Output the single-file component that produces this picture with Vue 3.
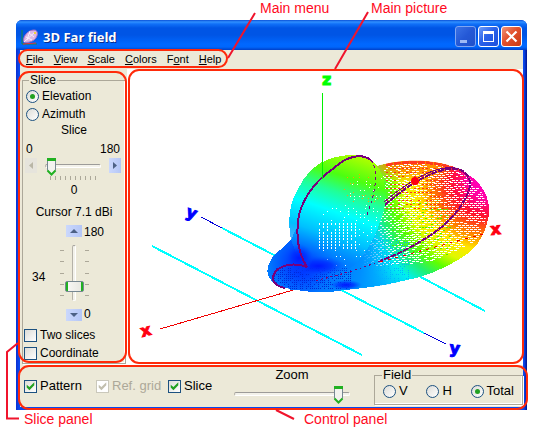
<script setup>
import { ref } from 'vue'

const menus = [
  ['', 'F', 'ile'],
  ['', 'V', 'iew'],
  ['', 'S', 'cale'],
  ['', 'C', 'olors'],
  ['F', 'o', 'nt'],
  ['', 'H', 'elp'],
]
const plane = ref('elevation')
const field = ref('total')
const slice = ref(0)
const cursor = ref(34)
const zoom = ref(95)
const twoSlices = ref(false)
const coordinate = ref(false)
const pattern = ref(true)
const refGrid = ref(true)
const showSlice = ref(true)

const lobe =
  'M290 290 L345 290 C372 288 400 282 420 277 C440 271 470 256 478 243 C487 230 490 215 489 206 C487 190 478 180 463 171 C450 164 435 162 425 161 C405 160 390 162 374 167 L330 240 Z'
const ball =
  'M291 240 C287 218 290 203 297 191 C305 174 315 163 332 158 C350 153 368 154 374 162 C389 177 388 205 380 222 C374 240 362 262 345 272 L305 276 Z'
const foot =
  'M291 240 C282 250 274 253 272 258 C264 270 267 279 276 284 C288 291 320 294 338 291 L353 288 L400 284 L390 215 L300 220 Z'

function noise(a, b) {
  const n = Math.sin(a * 12.9898 + b * 78.233) * 43758.5453
  return n - Math.floor(n)
}

// Openings of the far lobe's wire mesh: short dashes on rows that bend round the axis
function meshGaps() {
  let gaps = ''
  for (let row = 0; row < 64; row++) {
    const y0 = 156 + row * 2
    for (let col = 0; col < 34; col++) {
      const x = 350 + col * 4 + (row % 2) * 2
      const bend = ((x - 425) / 60) * ((215 - y0) / 60) * -7
      const y = Math.round(y0 + bend)
      const low = y - (264 + (400 - x) * 0.1) + Math.max(0, x - 430) * 0.35
      if (low > 0 || x < 384 - (y - 170) * 0.4) continue
      const chance = Math.min(0.76, 0.4 + (x - 345) / 110)
      if (noise(col, row) < chance) gaps += `M${x} ${y + 0.5}h${x > 395 ? 3 : 2}`
    }
  }
  return gaps
}

// Openings seen through the near lobe, set on arcs
function ballGaps() {
  let gaps = ''
  for (let c = 0; c < 15; c++) {
    for (let y = 178; y < 268; y += 3) {
      const x = Math.round(319 + c * 4 + Math.pow((y - 235) / 16, 2) * (c / 18 + 0.1))
      const inside = x - 316 > (y < 222 ? (222 - y) * 0.7 : (y - 240) * 0.4)
      const middle = y > 220 && y < 250 && c < 10
      if (inside && noise(x, y) > (middle ? 0.1 : 0.74)) gaps += `M${x + 0.5} ${y}v${middle ? 2 : 1}`
    }
  }
  return gaps
}

function specks(x0, y0, w, h, step, limit, length = 1) {
  let out = ''
  for (let y = y0; y < y0 + h; y += step)
    for (let x = x0; x < x0 + w; x += step) if (noise(x, y) > limit) out += `M${x} ${y + 0.5}h${length}`
  return out
}

const lobeGaps = meshGaps()
const nearGaps = ballGaps()
const blueDots = specks(274, 268, 78, 22, 2, 0.4)
const skyDots = specks(340, 240, 70, 48, 2, 0.55)
const hotDots = specks(386, 168, 84, 44, 4, 0.4, 2)
const limeDots = specks(392, 200, 60, 56, 3, 0.7, 2)
const warmDots = specks(344, 174, 34, 30, 3, 0.8)
</script>

<template>
  <div class="page">
    <main class="window">
      <header class="title-bar">
        <svg class="app-icon" viewBox="0 0 18 16" aria-hidden="true">
          <path d="M1 1v14h15" fill="none" stroke="#1d8a3a" />
          <path d="M2 15L15 14" stroke="#e0343c" />
          <path d="M3 13C1 8 7 1 13 1c5 0 4 7 0 10-3 2-7 3-10 2z" fill="#dcb8e6" stroke="#a870c4" />
          <path d="M3 13L14 3M5 8l6 3M8 4l5 4M6 11l3-9" stroke="#f8ecfb" fill="none" />
          <path d="M13 3h2v2h-2z" fill="#f3d43c" />
        </svg>
        <h1>3D Far field</h1>
        <div class="window-buttons">
          <button type="button" class="dim" aria-label="Minimize">
            <svg viewBox="0 0 21 21"><path d="M5 14h7v3H5z" fill="#9db9f5" /></svg>
          </button>
          <button type="button" aria-label="Maximize">
            <svg viewBox="0 0 21 21"><path d="M5 5h11v11H5zM6 8v7h9V8z" fill="#fff" fill-rule="evenodd" /></svg>
          </button>
          <button type="button" class="close" aria-label="Close">
            <svg viewBox="0 0 21 21"><path d="M5.500 5.500l10 10M15.500 5.500l-10 10" stroke="#fff" stroke-width="2.200" /></svg>
          </button>
        </div>
      </header>

      <div class="menu-row">
        <nav class="menu marked">
          <button v-for="m in menus" :key="m.join('')" type="button">{{ m[0] }}<u>{{ m[1] }}</u>{{ m[2] }}</button>
        </nav>
      </div>

      <div class="work">
        <aside class="slice-panel marked">
          <fieldset>
            <legend>Slice</legend>
            <label class="option"><input v-model="plane" type="radio" name="plane" value="elevation" />Elevation</label>
            <label class="option"><input v-model="plane" type="radio" name="plane" value="azimuth" />Azimuth</label>
            <label class="caption" for="slice">Slice</label>
            <div class="ends"><span>0</span><span>180</span></div>
            <div class="slide-row">
              <button type="button" class="step" disabled aria-label="Previous slice">
                <svg viewBox="0 0 12 15"><path d="M8 4v7L4 7.500z" fill="#b9b6a6" /></svg>
              </button>
              <div class="slide">
                <input id="slice" v-model="slice" type="range" min="0" max="180" />
                <div class="ticks"><i v-for="n in 10" :key="n"></i></div>
              </div>
              <button type="button" class="step" aria-label="Next slice">
                <svg viewBox="0 0 12 15"><path d="M4 4l4 3.500L4 11z" fill="#4d6185" /></svg>
              </button>
            </div>
            <output class="value" for="slice">{{ slice }}</output>
            <label class="reading" for="cursor">Cursor 7.1 dBi</label>
            <div class="cursor-grid">
              <output class="angle" for="cursor">{{ cursor }}</output>
              <div class="column">
                <button type="button" class="step wide" aria-label="Raise cursor">
                  <svg viewBox="0 0 16 12"><path d="M4 8h8L8 4z" fill="#4d6185" /></svg>
                </button>
                <div class="upright">
                  <div class="side-ticks"><i v-for="n in 5" :key="n"></i></div>
                  <input id="cursor" v-model="cursor" class="vertical" type="range" min="0" max="180" />
                  <div class="side-ticks"><i v-for="n in 5" :key="n"></i></div>
                </div>
                <button type="button" class="step wide" aria-label="Lower cursor">
                  <svg viewBox="0 0 16 12"><path d="M4 4h8L8 8z" fill="#4d6185" /></svg>
                </button>
              </div>
              <div class="limits"><span>180</span><span>0</span></div>
            </div>
            <label class="option check"><input v-model="twoSlices" type="checkbox" />Two slices</label>
            <label class="option check"><input v-model="coordinate" type="checkbox" />Coordinate</label>
          </fieldset>
        </aside>

        <section class="picture marked" aria-label="Far field pattern">
          <svg viewBox="127 69 396 294" role="img" aria-label="Three-dimensional far field pattern">
            <defs>
              <radialGradient id="heat" gradientUnits="userSpaceOnUse" cx="488" cy="178" r="190">
                <stop offset="0" stop-color="#ff00d0" />
                <stop offset=".11" stop-color="#ff00a0" />
                <stop offset=".2" stop-color="#ff1030" />
                <stop offset=".3" stop-color="#ff8000" />
                <stop offset=".38" stop-color="#ffe600" />
                <stop offset=".45" stop-color="#e0f800" />
                <stop offset=".52" stop-color="#60ff00" />
                <stop offset=".59" stop-color="#20f070" />
                <stop offset=".67" stop-color="#00f0f0" />
                <stop offset=".78" stop-color="#00b8ff" />
                <stop offset="1" stop-color="#0070ff" />
              </radialGradient>
              <radialGradient id="hot">
                <stop offset="0" stop-color="#ff5000" />
                <stop offset=".5" stop-color="#ff9000" stop-opacity=".8" />
                <stop offset="1" stop-color="#ffe000" stop-opacity="0" />
              </radialGradient>
              <linearGradient id="near" gradientUnits="userSpaceOnUse" x1="318" y1="270" x2="357" y2="155">
                <stop offset="0" stop-color="#0060ff" stop-opacity="0" />
                <stop offset=".14" stop-color="#0084ff" stop-opacity=".6" />
                <stop offset=".3" stop-color="#00c0ff" />
                <stop offset=".5" stop-color="#00ffff" />
                <stop offset=".66" stop-color="#20ff98" />
                <stop offset=".8" stop-color="#4cff10" />
                <stop offset="1" stop-color="#b0ff00" />
              </linearGradient>
              <radialGradient id="foot" gradientUnits="userSpaceOnUse" cx="302" cy="264" r="92">
                <stop offset="0" stop-color="#0020ff" />
                <stop offset=".2" stop-color="#0050ff" />
                <stop offset=".36" stop-color="#0078ff" />
                <stop offset=".65" stop-color="#0090ff" />
                <stop offset="1" stop-color="#00b0ff" stop-opacity="0" />
              </radialGradient>
              <radialGradient id="deep">
                <stop offset="0" stop-color="#0018ff" />
                <stop offset=".5" stop-color="#0030ff" stop-opacity=".8" />
                <stop offset="1" stop-color="#0050ff" stop-opacity="0" />
              </radialGradient>
              <clipPath id="lobe-clip"><path :d="lobe" /></clipPath>
              <clipPath id="mesh-clip"><path :d="lobe" transform="translate(17 9) scale(.96)" /></clipPath>
              <clipPath id="ball-clip"><path :d="ball" /></clipPath>
              <clipPath id="foot-clip"><path :d="foot" /></clipPath>
            </defs>

            <g fill="none" shape-rendering="crispEdges">
              <g stroke="#00ffff" stroke-width="2">
                <path d="M152 246L362 355" />
                <path d="M222 228L424 333" />
                <path d="M400 266L485 311" />
              </g>
              <path d="M201 217L222 228M424 333L446 344" stroke="#0000d8" />
              <path d="M160 329L300 288" stroke="#f00000" />
            </g>

            <g shape-rendering="crispEdges" fill="none">
              <path :d="lobe" fill="url(#heat)" />
              <g clip-path="url(#lobe-clip)">
                <ellipse cx="408" cy="160" rx="52" ry="26" fill="url(#hot)" />
                <path :d="limeDots" stroke="#50f000" />
              </g>
              <g clip-path="url(#mesh-clip)">
                <path :d="lobeGaps" stroke="#fff" />
                <path :d="hotDots" stroke="#ff3020" />
              </g>
              <g clip-path="url(#lobe-clip)">
                <path :d="skyDots" stroke="#00b4ff" />
                <path d="M386 165C405 160 440 161 463 171" stroke="#ff3820" stroke-width="3" stroke-dasharray="7 1" />
              </g>
              <path :d="foot" fill="url(#foot)" />
              <g clip-path="url(#foot-clip)">
                <path :d="blueDots" stroke="#0028d8" />
              </g>
              <path :d="ball" fill="url(#near)" />
              <g clip-path="url(#ball-clip)">
                <path :d="nearGaps" stroke="#fff" />
                <path :d="warmDots" stroke="#ffa000" />
              </g>
              <ellipse cx="318" cy="266" rx="28" ry="10" fill="url(#deep)" />
              <ellipse cx="299" cy="258" rx="14" ry="14" fill="url(#deep)" />
              <ellipse cx="346" cy="285" rx="16" ry="5" fill="url(#deep)" />

              <g stroke="#78007c">
                <path d="M385 205C402 190 422 176 440 171C458 165 468 171 470 182C471 196 453 220 435 232C415 246 398 254 380 261" stroke-width="2" stroke-dasharray="6 1" />
                <path d="M384 202C402 187 422 173 440 169C448 167 456 167 462 170" />
                <path d="M380 261C360 269 340 275 314 281" stroke-dasharray="2 3" />
                <path d="M307 267C299 255 295 236 299 215C305 192 321 177 334 168C347 156 361 153 371 160" stroke-width="2" />
                <path d="M371 160C379 171 376 191 366 218" stroke-dasharray="3 3" />
                <path d="M307 267C294 262 282 265 276 271C269 280 275 286 285 288" stroke-width="2" />
              </g>
              <path d="M380 262L487 233" stroke="#f00000" stroke-dasharray="3 5" />
              <path d="M322.500 93v86" stroke="#00f000" />
            </g>
            <circle cx="415" cy="181" r="4" fill="#ff0010" />

            <g class="axis">
              <text x="322" y="85" fill="#00ff00" stroke="#00ff00">z</text>
              <text x="0" y="0" fill="#ff0010" stroke="#ff0010" transform="translate(491 235) rotate(-6)">x</text>
              <text x="0" y="0" fill="#ff0010" stroke="#ff0010" transform="translate(142 337) rotate(-14)">x</text>
              <text x="0" y="0" fill="#0000ff" stroke="#0000ff" transform="translate(185 216) rotate(20)">y</text>
              <text x="0" y="0" fill="#0000ff" stroke="#0000ff" transform="translate(449 353) rotate(6)">y</text>
            </g>
          </svg>
        </section>
      </div>

      <footer class="control-panel marked">
        <div class="checks">
          <label class="option"><input v-model="pattern" type="checkbox" />Pattern</label>
          <label class="option off"><input v-model="refGrid" type="checkbox" disabled />Ref. grid</label>
          <label class="option"><input v-model="showSlice" type="checkbox" />Slice</label>
        </div>
        <div class="zoom">
          <label for="zoom">Zoom</label>
          <input id="zoom" v-model="zoom" type="range" min="0" max="100" />
        </div>
        <fieldset class="field">
          <legend>Field</legend>
          <div class="choices">
            <label class="option"><input v-model="field" type="radio" name="field" value="v" />V</label>
            <label class="option"><input v-model="field" type="radio" name="field" value="h" />H</label>
            <label class="option"><input v-model="field" type="radio" name="field" value="total" />Total</label>
          </div>
        </fieldset>
      </footer>
    </main>

    <svg class="leaders" viewBox="0 0 543 429" aria-hidden="true">
      <path d="M255 13L228 58M368 12L335 69M18 343L7 352V418.500H19M276 410L294 419" />
    </svg>
    <span class="note main-menu">Main menu</span>
    <span class="note main-picture">Main picture</span>
    <span class="note slice-note">Slice panel</span>
    <span class="note control-note">Control panel</span>
  </div>
</template>

<style>
body {
  background: #fff;
}
</style>

<style scoped>
* {
  box-sizing: border-box;
}
.page {
  position: relative;
  padding: 20px 16px 19px;
  font: 12px/14px 'Liberation Sans', Arial, sans-serif;
  color: #000;
}
.window {
  border-radius: 6px 6px 0 0;
  padding: 0 4px 3px;
  background: linear-gradient(90deg, #0a2fd0 0, #0a48ee 3px, #0a48ee calc(100% - 3px), #00138c 100%);
}
button,
input {
  font: inherit;
  color: inherit;
  margin: 0;
  padding: 0;
}
svg {
  display: block;
}
fieldset {
  min-width: 0;
  margin: 0;
  padding: 0;
  border: 1px solid #aca899;
  box-shadow: inset -1px -1px #fff, 1px 1px #fff;
}
legend {
  padding: 0 1px;
  background: #ece9d8;
}

/* Title bar */
.title-bar {
  display: flex;
  align-items: center;
  height: 30px;
  margin: 0 -4px;
  padding: 3px 5px 0;
  border-radius: 6px 6px 0 0;
  background: linear-gradient(#0a50d8 0, #3090ff 2px, #1070f8 4px, #0055e5 8px, #0055e5 15px, #0068ff 24px, #0066fc 27px, #0040c8 30px);
}
.app-icon {
  width: 18px;
  height: 16px;
}
h1 {
  flex: 1;
  margin: 0 0 0 4px;
  font: bold 13px/16px 'Open Sans', 'Noto Sans', sans-serif;
  color: #fff;
  text-shadow: 1px 1px #0a2c8c;
}
.window-buttons {
  display: flex;
  gap: 2px;
}
.window-buttons button {
  width: 21px;
  height: 21px;
  border: 1px solid #fff;
  border-radius: 3px;
  background: linear-gradient(135deg, #6d9cf8, #2a62ea 45%, #1e50dc);
}
.window-buttons svg {
  margin: -1px;
  width: 21px;
}
.window-buttons .dim {
  border-color: #7fa5f2;
  background: linear-gradient(135deg, #3a72e6, #2458d6 50%, #2050c8);
}
.window-buttons .close {
  background: linear-gradient(135deg, #f0957a, #e2502c 45%, #c83a14);
}

/* Highlight frames around the four regions */
.marked {
  position: relative;
}
.marked::after {
  content: '';
  position: absolute;
  border: 2px solid #ff2a0a;
  border-radius: 11px;
  pointer-events: none;
  z-index: 1;
}
.menu::after {
  inset: -1px -1px 1px -2px;
}
.slice-panel::after {
  inset: 2px 0 2px -2px;
}
.picture::after {
  inset: 0 -1px 1px 1px;
}
.control-panel::after {
  inset: 0 -5px -3px -2px;
}

.menu-row,
.slice-panel,
.control-panel {
  background: #ece9d8;
}
.menu {
  display: flex;
  gap: 10px;
  width: fit-content;
  height: 19px;
  padding: 0 6px 2px;
  font-size: 11px;
}
.menu button {
  border: 0;
  background: none;
}

.work {
  display: flex;
  background: #fff;
}
.slice-panel {
  flex: none;
  width: 107px;
  padding: 4px 1px 1px 2px;
}
.slice-panel fieldset {
  padding-bottom: 1px;
}
.slice-panel legend {
  margin-left: 6px;
}
.option {
  display: flex;
  align-items: center;
  gap: 3px;
  height: 18px;
  white-space: nowrap;
}
.slice-panel .option {
  padding-left: 3px;
}
.slice-panel .check {
  padding-left: 1px;
}
input[type='radio'],
input[type='checkbox'] {
  appearance: none;
  flex: none;
  display: grid;
  place-items: center;
  width: 13px;
  height: 13px;
  border: 1px solid #1c5180;
  background: linear-gradient(135deg, #dcdcd7, #fff);
}
input[type='radio'] {
  border-radius: 50%;
}
input[type='radio']:checked::after {
  content: '';
  width: 5px;
  height: 5px;
  border-radius: 50%;
  background: #21a121;
}
input[type='checkbox']:checked::after {
  content: '';
  width: 9px;
  height: 9px;
  background: #21a121;
  clip-path: polygon(8% 35%, 38% 62%, 92% 8%, 92% 42%, 38% 96%, 8% 68%);
}
.off {
  color: #aca899;
}
.off input {
  border-color: #cac8bb;
  background: #fff;
}
.off input[type='checkbox']:checked::after {
  background: #c2bfae;
}
.caption,
.value,
.reading {
  display: block;
  text-align: center;
}
.ends {
  display: flex;
  justify-content: space-between;
  margin-top: 5px;
  padding: 0 5px 0 3px;
}
.slide-row {
  display: flex;
  justify-content: space-between;
  align-items: flex-start;
  padding: 0 4px 0 2px;
}
.step {
  width: 12px;
  height: 15px;
  margin-top: 2px;
  border: 0;
  background: linear-gradient(90deg, #cbd8fc, #b4c6f6);
}
.step:disabled {
  background: #e6e4dc;
}
.step.wide {
  width: 16px;
  height: 12px;
  margin: 0;
}
.slide {
  width: 56px;
}
input[type='range'] {
  appearance: none;
  display: block;
  width: 100%;
  height: 19px;
  background: none;
}
input[type='range']::-webkit-slider-runnable-track {
  height: 4px;
  border: 1px solid;
  border-color: #9d9c99 #fff #fff #b5b2a8;
  border-radius: 2px;
  background: #f3f2ea;
}
input[type='range']::-webkit-slider-thumb {
  appearance: none;
  width: 11px;
  height: 19px;
  margin-top: -8px;
  border: 0;
  background: url("data:image/svg+xml,%3Csvg xmlns='http://www.w3.org/2000/svg' viewBox='0 0 11 19'%3E%3Cpath d='M1.500 1.500h8v12l-4 4-4-4z' fill='%23f3f3ef' stroke='%23778892'/%3E%3Cpath d='M1 1h9v3H1z' fill='%2321b121'/%3E%3Cpath d='M1.500 13.500l4 4 4-4' fill='none' stroke='%2321b121' stroke-width='2'/%3E%3C/svg%3E");
}
.ticks {
  display: flex;
  justify-content: space-between;
  margin-top: 1px;
  padding: 0 5px;
}
.ticks i {
  width: 1px;
  height: 4px;
  background: #aca899;
}
.value {
  margin-top: 3px;
}
.reading {
  margin-top: 8px;
}
.cursor-grid {
  display: grid;
  grid-template-columns: 41px 20px 1fr;
  margin: 6px 0 5px;
}
.angle {
  align-self: center;
  padding: 8px 0 0 9px;
}
.column {
  display: flex;
  flex-direction: column;
  align-items: center;
  gap: 8px;
}
.upright {
  display: flex;
  justify-content: center;
  height: 56px;
}
.side-ticks {
  display: flex;
  flex-direction: column;
  justify-content: space-between;
  padding: 5px 0;
}
.side-ticks i {
  width: 4px;
  height: 1px;
  background: #aca899;
}
input.vertical {
  writing-mode: vertical-lr;
  direction: rtl;
  width: 21px;
  height: 56px;
}
input.vertical::-webkit-slider-runnable-track {
  width: 4px;
  height: 56px;
}
input.vertical::-webkit-slider-thumb {
  width: 19px;
  height: 11px;
  margin: 0 0 0 -8px;
  border: 1px solid #778892;
  border-radius: 2px;
  background: linear-gradient(90deg, #21b121 2px, #f7f7f4 2px, #e8e8e2 15px, #21b121 15px);
}
.limits {
  display: flex;
  flex-direction: column;
  justify-content: space-between;
}

.picture {
  flex: 1;
  min-width: 0;
}
.axis {
  font: bold 16px 'DejaVu Sans', sans-serif;
}

/* Bottom controls */
.control-panel {
  display: flex;
  font-size: 13px;
}
.checks {
  display: flex;
  align-items: center;
  padding-left: 4px;
}
.checks .option {
  width: 72px;
}
.checks .option:last-child {
  width: 62px;
}
.zoom {
  flex: 1;
  padding: 3px 24px 0 4px;
}
.zoom label {
  display: block;
  text-align: center;
}
.zoom input {
  margin-top: 2px;
}
.field {
  width: 149px;
  margin: 3px 0 2px;
}
.field legend {
  margin-left: 7px;
}
.choices {
  display: flex;
  justify-content: space-between;
  padding: 0 8px 4px;
}

/* Callouts over the window */
.leaders {
  position: absolute;
  top: 0;
  left: 0;
  width: 543px;
  height: 429px;
  fill: none;
  stroke: #f0142c;
  stroke-width: 2;
  pointer-events: none;
  z-index: 2;
}
.note {
  position: absolute;
  font-size: 14px;
  line-height: 16px;
  color: #ff0a1e;
  white-space: nowrap;
}
.main-menu {
  top: 0;
  left: 260px;
}
.main-picture {
  top: 0;
  left: 371px;
}
.slice-note {
  top: 411px;
  left: 24px;
}
.control-note {
  top: 411px;
  left: 304px;
}
</style>
